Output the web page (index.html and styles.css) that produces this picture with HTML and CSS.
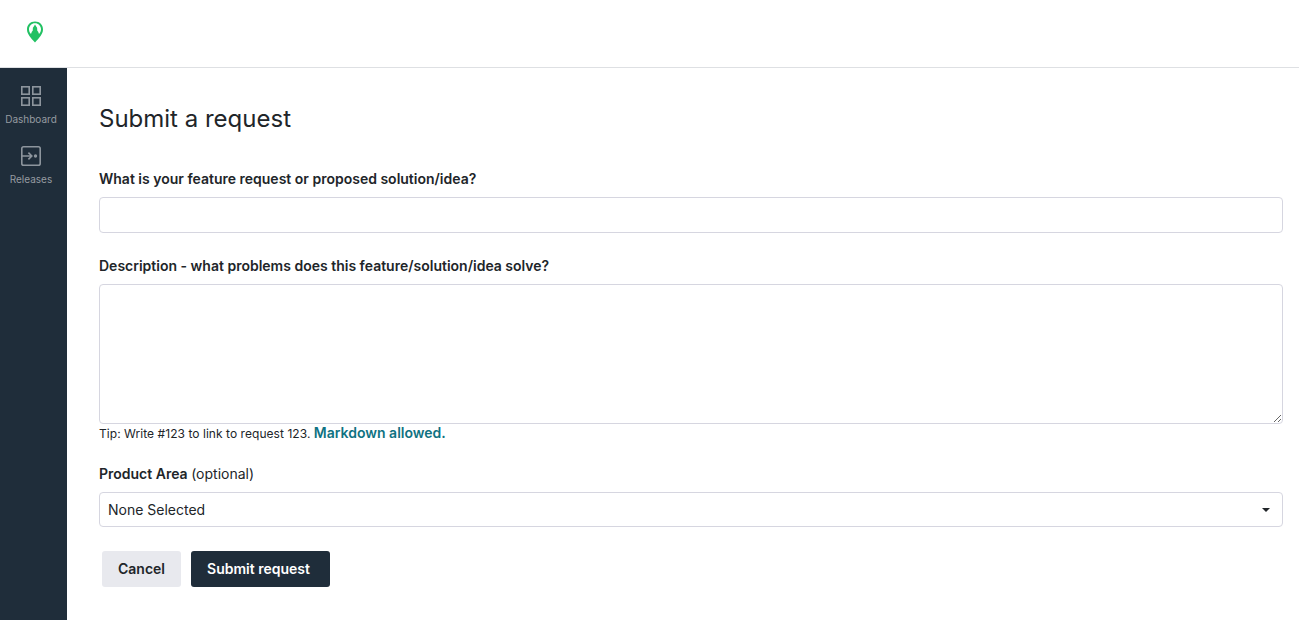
FILE: index.html
```html
<!DOCTYPE html>
<html lang="en">
<head>
<meta charset="utf-8">
<title>Submit a request</title>
<link rel="stylesheet" href="styles.css">
</head>
<body>
<header class="topbar">
  <svg class="logo" width="18" height="22" viewBox="0 0 18 22">
    <path fill="#22c163" fill-rule="evenodd" d="M9 0.5C4.2 0.5 1 4 1 8.400C1 12.800 4.800 16.800 9 21.500C13.200 16.800 17 12.800 17 8.400C17 4 13.800 0.500 9 0.500ZM9 2.300C12.400 2.300 15 5 15 8.300C15 10.200 14.200 11.800 13 13.100L12.200 10.800L11.300 9.800L11.100 6.800L10.200 5.600L9 3.400L7.800 5.600L6.900 6.800L6.700 9.800L5.800 10.800L5 13.100C3.800 11.800 3 10.200 3 8.300C3 5 5.600 2.300 9 2.300Z"/>
  </svg>
</header>
<div class="shell">
  <nav class="sidebar">
    <a class="nav-item">
      <svg width="22" height="22" viewBox="0 0 22 22" fill="none" stroke="#8d959d" stroke-width="1.6">
        <rect x="1.800" y="1.800" width="7.400" height="7.400"/>
        <rect x="12.800" y="1.800" width="7.400" height="7.400"/>
        <rect x="1.800" y="12.800" width="7.400" height="7.400"/>
        <rect x="12.800" y="12.800" width="7.400" height="7.400"/>
      </svg>
      <span>Dashboard</span>
    </a>
    <a class="nav-item">
      <svg width="22" height="22" viewBox="0 0 22 22" fill="none" stroke="#8d959d" stroke-width="1.600">
        <rect x="1.800" y="1.800" width="18.400" height="18.400" rx="1.800"/>
        <path d="M1.800 11H11.500M8.400 7.600L11.800 11L8.400 14.400"/>
        <circle cx="15.500" cy="11" r="1.700" fill="#8d959d" stroke="none"/>
      </svg>
      <span>Releases</span>
    </a>
  </nav>
  <main class="content">
    <h1 class="title">Submit a request</h1>
    <form class="form">
      <div class="field">
        <label class="label" for="idea">What is your feature request or proposed solution/idea?</label>
        <input class="input" id="idea" type="text">
      </div>
      <div class="field">
        <label class="label" for="desc">Description - what problems does this feature/solution/idea solve?</label>
        <textarea class="input area" id="desc"></textarea>
        <p class="tip">Tip: Write #123 to link to request 123. <a class="md">Markdown allowed.</a></p>
      </div>
      <div class="field">
        <label class="label" for="area">Product Area <span class="optional">(optional)</span></label>
        <div class="select" id="area">
          <span>None Selected</span>
          <i class="caret"></i>
        </div>
      </div>
      <div class="actions">
        <button class="btn cancel" type="button">Cancel</button>
        <button class="btn submit" type="button">Submit request</button>
      </div>
    </form>
  </main>
</div>
</body>
</html>
```
FILE: styles.css
```css
* { box-sizing: border-box; }
html, body { margin: 0; height: 100%; overflow: hidden; }
body {
  background: #fff;
  color: #212529;
  font-family: Inter, "Liberation Sans", sans-serif;
  font-size: 14px;
  display: flex;
  flex-direction: column;
}
.topbar {
  height: 68px;
  flex: none;
  border-bottom: 1px solid #dee0e3;
  padding: 21px 0 0 26px;
}
.logo { display: block; }
.shell { flex: 1; display: flex; min-height: 0; }
.sidebar {
  width: 67px;
  flex: none;
  background: #1f2d3a;
  display: flex;
  flex-direction: column;
  align-items: center;
  padding-right: 5px;
  padding-top: 17px;
  gap: 15px;
}
.nav-item {
  display: flex;
  flex-direction: column;
  align-items: center;
  gap: 6px;
  color: #969ba1;
  font-size: 10px;
  line-height: 12px;
  height: 45px;
}
.content { flex: 1; padding: 36px 16px 0 32px; min-width: 0; }
.title {
  margin: 0 0 37px;
  font-size: 24px;
  font-weight: 400;
  line-height: 29px;
}
.form { display: flex; flex-direction: column; }
.field { margin-bottom: 24px; }
.label {
  display: block;
  font-weight: 600;
  line-height: 17px;
  margin-bottom: 10px;
}
.optional { font-weight: 400; }
.input {
  display: block;
  width: 100%;
  height: 36px;
  border: 1px solid #d6d6e0;
  border-radius: 4px;
  background: #fff;
  padding: 8px;
  font: inherit;
  outline: none;
}
.area { height: 140px; resize: vertical; }
.tip { margin: 0 0 -1px; font-size: 12px; line-height: 17px; letter-spacing: 0.05px; }
.md { color: #0f7282; font-size: 14px; font-weight: 600; letter-spacing: 0; }
.select {
  height: 35px;
  border: 1px solid #d6d6e0;
  border-radius: 4px;
  display: flex;
  align-items: center;
  justify-content: space-between;
  padding: 0 12px 0 8px;
}
.caret {
  width: 0;
  height: 0;
  border-left: 4px solid transparent;
  border-right: 4px solid transparent;
  border-top: 4px solid #212529;
}
.actions { display: flex; gap: 10px; padding-left: 3px; }
.btn {
  height: 36px;
  border: 0;
  border-radius: 3px;
  font: inherit;
  font-weight: 600;
  padding: 0 16px 1px;
}
.cancel { background: #e8e9ee; color: #212529; }
.submit { background: #1f2d3a; color: #fff; padding-right: 20px; }
```
